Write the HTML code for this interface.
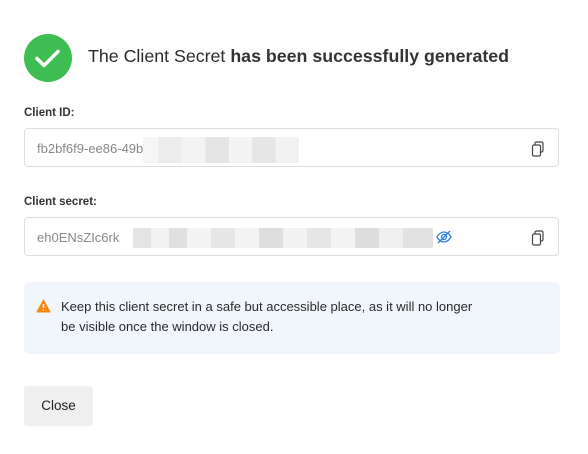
<!DOCTYPE html>
<html><head><style>
body{margin:0;width:588px;height:454px;background:#fff;font-family:"Liberation Sans",Arial,sans-serif;position:relative;overflow:hidden;color:#222}
.abs{position:absolute}
.lbl{font-size:11.5px;font-weight:bold;color:#333}
.inp{border:1px solid #ddd;border-radius:4px;height:39px;width:535px;left:24px;box-sizing:border-box}
.val{font-size:13px;color:#888;left:12px;top:12px;position:absolute}
.blur{position:absolute;background:#e6e6e6}
</style></head><body>
<svg class="abs" style="left:24px;top:34px" width="48" height="48" viewBox="0 0 48 48"><circle cx="24" cy="24" r="24" fill="#3dbd52"/><path d="M13 24.5l7 7 14-14" stroke="#fff" stroke-width="3.5" fill="none" stroke-linecap="round" stroke-linejoin="round"/></svg>
<div class="abs" style="left:88px;top:46px;font-size:17.8px;color:#2a2a2a">The Client Secret <span style="font-weight:bold;color:#333">has been successfully generated</span></div>
<div class="abs lbl" style="left:24px;top:107px">Client ID:</div>
<div class="abs inp" style="top:128px"><span class="val">fb2bf6f9-ee86-49b</span>
<div class="blur" style="left:118px;top:8px;width:156px;height:26px;background:linear-gradient(90deg,#f6f6f6 0 10%,#ececec 10% 25%,#f3f3f3 25% 40%,#e4e4e4 40% 55%,#f4f4f4 55% 70%,#e6e6e6 70% 85%,#f2f2f2 85%)"></div>
<svg class="abs" style="left:506px;top:12px" width="14" height="16" viewBox="0 0 14 16"><rect x="4" y="1" width="8" height="10" rx="1.5" fill="none" stroke="#444" stroke-width="1.2"/><rect x="1.5" y="4" width="8" height="11" rx="1.5" fill="#fff" stroke="#444" stroke-width="1.2"/></svg></div>
<div class="abs lbl" style="left:24px;top:196px">Client secret:</div>
<div class="abs inp" style="top:217px"><span class="val">eh0ENsZIc6rk</span>
<div class="blur" style="left:108px;top:10px;width:300px;height:20px;background:linear-gradient(90deg,#e4e4e4 0 6%,#f2f2f2 6% 12%,#e0e0e0 12% 18%,#f4f4f4 18% 26%,#e6e6e6 26% 34%,#f3f3f3 34% 42%,#dedede 42% 50%,#f2f2f2 50% 58%,#e5e5e5 58% 66%,#f3f3f3 66% 74%,#dddddd 74% 82%,#efefef 82% 90%,#e2e2e2 90%)"></div>
<svg class="abs" style="left:411px;top:11px" width="16" height="16" viewBox="0 0 16 16" fill="none" stroke="#2e7fe0" stroke-width="1.3"><path d="M1 8c2-3.5 4.5-5 7-5s5 1.5 7 5c-2 3.5-4.5 5-7 5s-5-1.5-7-5z"/><circle cx="8" cy="8" r="2.5"/><path d="M2 14L14 2"/></svg>
<svg class="abs" style="left:506px;top:12px" width="14" height="16" viewBox="0 0 14 16"><rect x="4" y="1" width="8" height="10" rx="1.5" fill="none" stroke="#444" stroke-width="1.2"/><rect x="1.5" y="4" width="8" height="11" rx="1.5" fill="#fff" stroke="#444" stroke-width="1.2"/></svg></div>
<div class="abs" style="left:24px;top:282px;width:536px;height:72px;background:#f1f5fc;border-radius:6px"></div>
<svg class="abs" style="left:36px;top:299px" width="15" height="14" viewBox="0 0 15 14"><path d="M7.5 1L14 13H1z" fill="#f5870f" stroke="#f5870f" stroke-linejoin="round"/><path d="M7.5 5v4" stroke="#fff" stroke-width="1.5"/><circle cx="7.5" cy="11" r=".8" fill="#fff"/></svg>
<div class="abs" style="left:61px;top:297px;font-size:13px;line-height:20px;color:#2a2a2a;width:420px">Keep this client secret in a safe but accessible place, as it will no longer be visible once the window is closed.</div>
<div class="abs" style="left:24px;top:386px;width:69px;height:40px;background:#efefef;border-radius:3px;font-size:13.5px;line-height:40px;text-align:center;color:#222">Close</div>
</body></html>
